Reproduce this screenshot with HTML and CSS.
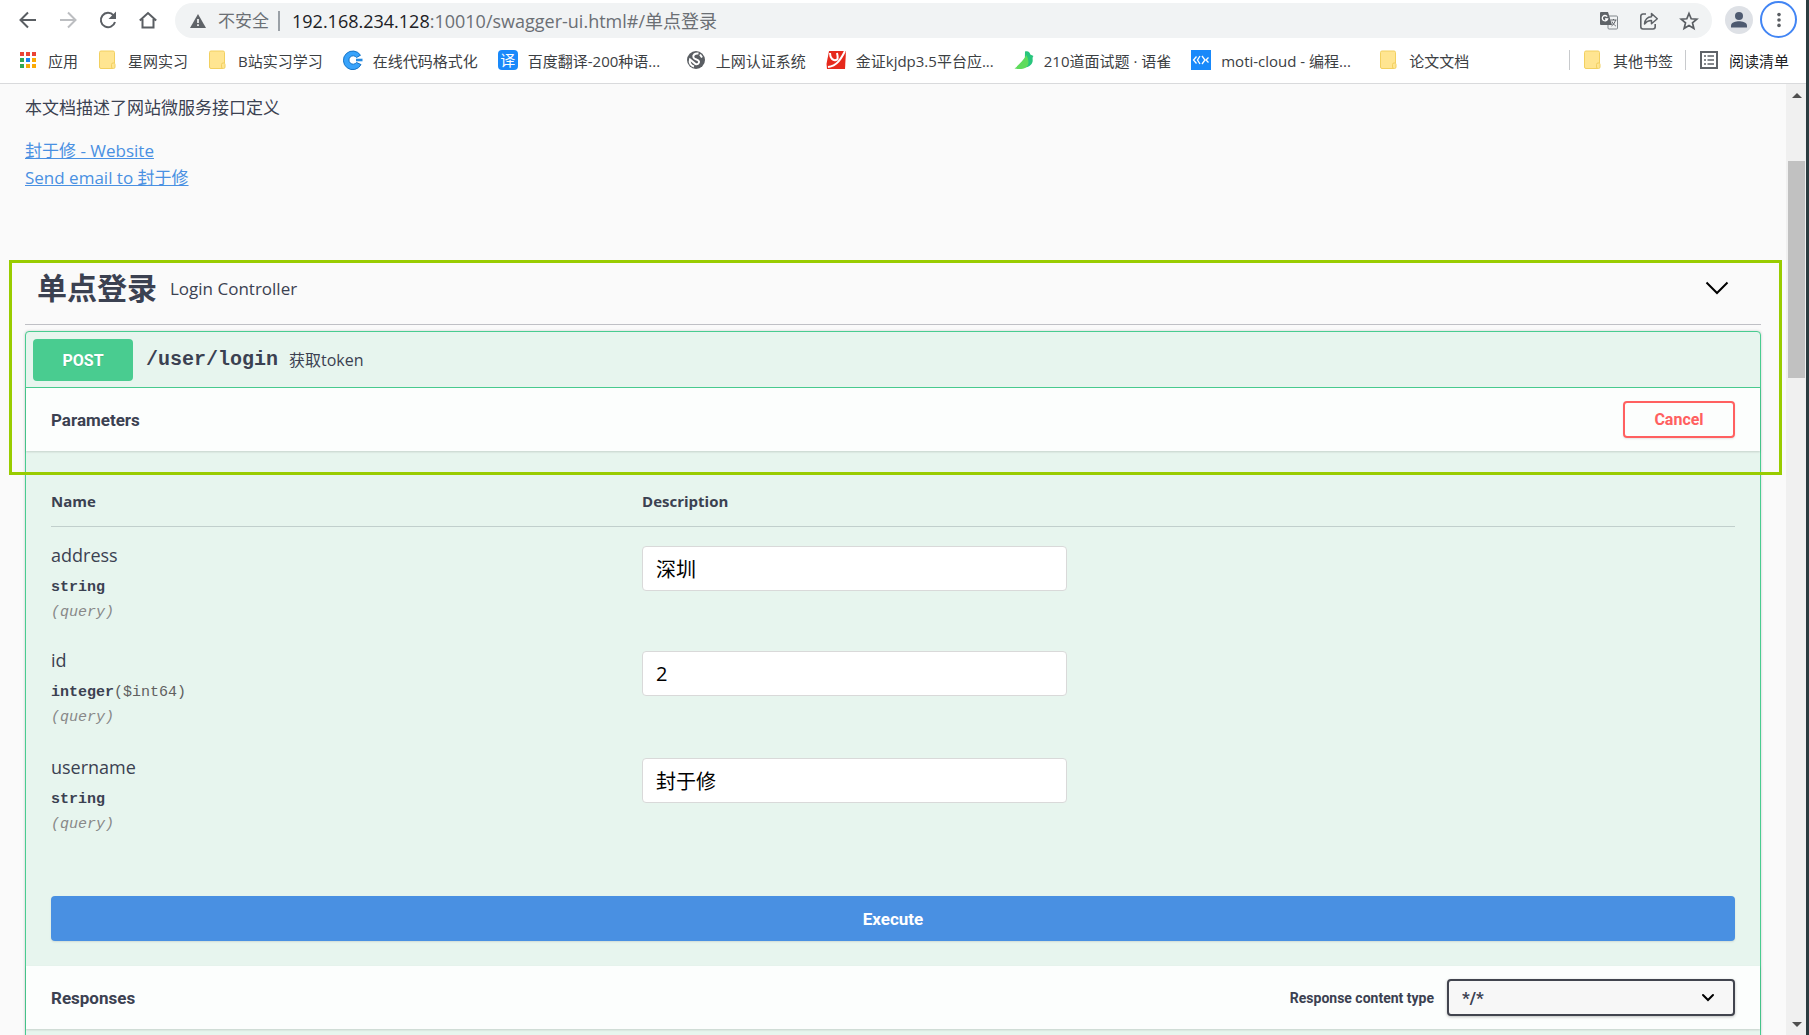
FILE: index.html
```html
<!DOCTYPE html>
<html lang="zh-CN">
<head>
<meta charset="utf-8">
<title>Swagger UI</title>
<link rel="stylesheet" href="styles.css">
</head>
<body>
<svg class="sprite" aria-hidden="true">
  <symbol id="folder" viewBox="0 0 20 20"><path d="M3 1h12a1.500 1.500 0 0 1 1.500 1.500V13a2 2 0 0 0-2 2v3.500H3A1.500 1.500 0 0 1 1.500 17V2.500A1.500 1.500 0 0 1 3 1z" fill="#ffe591" stroke="#f2d060"/><rect x="13.500" y="13" width="3.500" height="5.500" rx="1.500" fill="#ffe591" stroke="#f2d060"/></symbol>
</svg>
<div class="screen">
  <div class="browser">
    <header class="chrome">
      <div class="toolbar">
        <button class="nav-btn" aria-label="后退"><svg viewBox="0 0 20 20"><path d="M18 10H3M10 2.500L2.500 10l7.500 7.500" fill="none" stroke="#5a5e63" stroke-width="2"/></svg></button>
        <button class="nav-btn" aria-label="前进"><svg viewBox="0 0 20 20"><path d="M2 10h15M10 2.500l7.500 7.500-7.500 7.500" fill="none" stroke="#bcbec1" stroke-width="2"/></svg></button>
        <button class="nav-btn" aria-label="刷新"><svg viewBox="0 0 20 20"><path d="M15.500 5.300A7.200 7.200 0 1 0 17 12" fill="none" stroke="#5a5e63" stroke-width="2"/><path d="M18 1.500V9h-7.500z" fill="#5a5e63"/></svg></button>
        <button class="nav-btn" aria-label="主页"><svg viewBox="0 0 20 20"><path d="M1.800 10.500L10 3l8.200 7.500M4.500 9v8.500h11V9" fill="none" stroke="#5a5e63" stroke-width="2"/></svg></button>
        <div class="omnibox">
          <svg class="warn" viewBox="0 0 16 14"><path d="M8 0l8 14H0z" fill="#5f6368"/><path d="M7.200 5h1.600v4H7.200zM7.200 10.300h1.600v1.700H7.200z" fill="#fff"/></svg>
          <span class="insecure">不安全</span>
          <span class="divider"></span>
          <span class="url"><b>192.168.234.128</b>:10010/swagger-ui.html#/单点登录</span>
          <button class="omni-btn" aria-label="翻译"><svg viewBox="0 0 20 20"><rect x="9" y="5" width="9.500" height="13" rx="1" fill="#f1f3f4" stroke="#80868b"/><path d="M2 1h7l4 13H2a1 1 0 0 1-1-1V2a1 1 0 0 1 1-1z" fill="#5f6368"/><path d="M8.200 5.600A2.700 2.700 0 1 0 8.600 8H6" fill="none" stroke="#fff" stroke-width="1.300"/><path d="M11.500 9h6M14.500 8v1M16.500 9c-.5 2.500-2 4.500-4 6M13 10.500c.8 2 2 3.500 3.800 4.500" fill="none" stroke="#5f6368"/></svg></button>
          <button class="omni-btn" aria-label="分享"><svg viewBox="0 0 20 20"><path d="M7 3H4a2.200 2.200 0 0 0-2.200 2.200v10.600A2.200 2.200 0 0 0 4 18h10a2.200 2.200 0 0 0 2.200-2.200V13" fill="none" stroke="#5f6368" stroke-width="1.600"/><path d="M5.500 13C6 8.500 8.500 6 12.500 5.800V2.500L18.300 7.700l-5.800 5V9.600C9.500 9.500 7.500 10.500 5.500 13z" fill="none" stroke="#5f6368" stroke-width="1.500" stroke-linejoin="round"/></svg></button>
          <button class="omni-btn" aria-label="收藏"><svg viewBox="0 0 20 20"><path d="M10 2.500l2.200 5.300 5.600.4-4.300 3.700 1.400 5.600L10 14.500l-4.900 3 1.400-5.600-4.300-3.700 5.600-.4z" fill="none" stroke="#5a5e63" stroke-width="1.700"/></svg></button>
        </div>
        <button class="avatar" aria-label="用户"><svg viewBox="0 0 28 28"><circle cx="14" cy="10" r="4" fill="#4e5a70"/><path d="M6 21.500v-2c0-3 5-4.200 8-4.200s8 1.200 8 4.200v2z" fill="#4e5a70"/></svg></button>
        <button class="menu" aria-label="菜单"><svg viewBox="0 0 20 20"><circle cx="10" cy="4" r="2" fill="#5a5e63"/><circle cx="10" cy="10" r="2" fill="#5a5e63"/><circle cx="10" cy="16" r="2" fill="#5a5e63"/></svg></button>
      </div>
      <nav class="bookmarks">
        <a href="#"><svg viewBox="0 0 20 20"><path d="M2 2h4v4H2zM8 2h4v4H8zM14 2h4v4h-4z" fill="#ea4335"/><path d="M2 8h4v4H2zM2 14h4v4H2z" fill="#34a853"/><path d="M8 8h4v4H8z" fill="#1a82f0"/><path d="M14 8h4v4h-4zM8 14h4v4H8zM14 14h4v4h-4z" fill="#fbaa05"/></svg><span>应用</span></a>
        <a href="#"><svg><use href="#folder"/></svg><span>星网实习</span></a>
        <a href="#"><svg><use href="#folder"/></svg><span>B站实习学习</span></a>
        <a href="#"><svg viewBox="0 0 20 20"><path d="M17.500 5.200L13.500 7.500A4.200 4.200 0 1 0 13.500 12.500L18 14.600A9.300 9.300 0 1 1 17.500 5.200z" fill="#38a3fb" stroke="#1573c6"/><path d="M13 8.700h6.500v2.600H13z" fill="#2389e0"/></svg><span>在线代码格式化</span></a>
        <a href="#"><span class="fanyi">译</span><span class="clipped">百度翻译-200种语...</span></a>
        <a href="#"><svg viewBox="0 0 20 20"><circle cx="10" cy="10" r="9" fill="#5a5e63"/><path d="M12.500 3.500C9 3 6.500 5 7.500 7.500s5 1.500 5.500 4-2 3-3.500 2.500L4 9.500c-1 3 .5 6 4 7M14 4.500l2 3" fill="none" stroke="#fff" stroke-width="2"/></svg><span>上网认证系统</span></a>
        <a href="#"><svg viewBox="0 0 20 20"><path d="M3 1h17l-1 18H1L.5 14z" fill="#e6291c"/><path d="M4 3c0 5 3 8 6 7 2 0 2-3 1-7M19 1c-4 8-8 15-17 16" fill="none" stroke="#fff" stroke-width="2"/></svg><span class="clipped">金证kjdp3.5平台应...</span></a>
        <a href="#"><svg viewBox="0 0 20 20"><path d="M11 1.500c3-1 5 .5 5.300 3L19.500 6c-1 1-1 2-.8 4 .2 4-3 7-8 7.500z" fill="#28c57d"/><path d="M12.500 5C10 9 5 15 .5 18.500c7 1.500 14 0 14-6 0-3-1-5-2-7.500z" fill="#5fdb5c"/></svg><span>210道面试题 · 语雀</span></a>
        <a href="#"><svg viewBox="0 0 20 20"><path d="M0 0h20v20H0z" fill="#1989fa"/><path d="M5.500 6.500L2.500 10l3 3.500M9 6l-2.500 4L9 14M11 6l3 4-3 4M17.500 7.500L15 10l2.500 2.500" fill="none" stroke="#fff" stroke-width="1.300"/></svg><span class="clipped">moti-cloud - 编程...</span></a>
        <a href="#"><svg><use href="#folder"/></svg><span>论文文档</span></a>
        <div class="bookmarks-end">
          <a href="#"><svg><use href="#folder"/></svg><span>其他书签</span></a>
          <a href="#"><svg viewBox="0 0 20 20"><rect x="2" y="2" width="16" height="16" fill="none" stroke="#5f6368" stroke-width="2"/><path d="M5 6h2M8.500 6H15M5 10h2M8.500 10H15M5 14h2M8.500 14H15" stroke="#5f6368" stroke-width="1.700"/></svg><span class="reading">阅读清单</span></a>
        </div>
      </nav>
    </header>
    <div class="viewport">
      <main class="page">
        <section class="info">
          <p>本文档描述了网站微服务接口定义</p>
          <div><a href="#">封于修 - Website</a></div>
          <div><a href="#">Send email to 封于修</a></div>
        </section>
        <section class="tag">
          <div class="highlight"></div>
          <div class="tag-head">
            <h1>单点登录</h1>
            <small>Login Controller</small>
            <button class="collapse" aria-label="收起"><svg viewBox="0 0 24 14"><path d="M1.500 1.500L12 12 22.500 1.500" fill="none" stroke="#000" stroke-width="2"/></svg></button>
          </div>
          <div class="opblock">
            <div class="summary">
              <span class="method">POST</span>
              <span class="path">/user/login</span>
              <span class="summary-text">获取token</span>
            </div>
            <div class="section-head">
              <h2>Parameters</h2>
              <button class="btn cancel">Cancel</button>
            </div>
            <div class="params">
              <table>
                <thead><tr><th class="col-name">Name</th><th>Description</th></tr></thead>
                <tbody>
                  <tr>
                    <td><label class="p-name" for="address">address</label><div class="p-type">string</div><div class="p-in">(query)</div></td>
                    <td><input id="address" type="text" value="深圳"></td>
                  </tr>
                  <tr>
                    <td><label class="p-name" for="id">id</label><div class="p-type">integer<span>($int64)</span></div><div class="p-in">(query)</div></td>
                    <td><input id="id" type="text" value="2"></td>
                  </tr>
                  <tr>
                    <td><label class="p-name" for="username">username</label><div class="p-type">string</div><div class="p-in">(query)</div></td>
                    <td><input id="username" type="text" value="封于修"></td>
                  </tr>
                </tbody>
              </table>
              <button class="btn execute">Execute</button>
            </div>
            <div class="section-head">
              <h2>Responses</h2>
              <label class="ctype-label" for="ctype">Response content type</label>
              <div class="select">
                <select id="ctype"><option>*/*</option></select>
                <svg viewBox="0 0 14 10"><path d="M2 2l5 5 5-5" fill="none" stroke="#000" stroke-width="2" stroke-linecap="round"/></svg>
              </div>
            </div>
            <div class="responses"></div>
          </div>
        </section>
      </main>
      <div class="scrollbar">
        <svg viewBox="0 0 10 5"><path d="M0 5l5-5 5 5z" fill="#505050"/></svg>
        <div class="track"><div class="thumb"></div></div>
        <svg viewBox="0 0 10 5"><path d="M0 0h10L5 5z" fill="#505050"/></svg>
      </div>
    </div>
  </div>
  <div class="desktop-edge"></div>
</div>
</body>
</html>
```
FILE: styles.css
```css
* { box-sizing: border-box; }

body {
  margin: 0;
  color: #3b4151;
  background: #fafafa;
  font-family: "Open Sans", "Noto Sans CJK SC", sans-serif;
  font-size: 17px;
}

h1, h2, p { margin: 0; }
button { padding: 0; border: 0; background: none; font: inherit; color: inherit; }
svg { display: block; flex: none; }
.sprite { position: absolute; width: 0; height: 0; }

.screen { display: flex; height: 100vh; overflow: hidden; }
.browser { flex: 1; min-width: 0; display: flex; flex-direction: column; }
.desktop-edge { width: 3px; background: #2b3c40; }

/* Browser toolbar */
.chrome { background: #fff; border-bottom: 1px solid #d9dadc; }
.toolbar { display: flex; align-items: center; padding: 1px 9px 1px 18px; }
.nav-btn { width: 20px; margin-right: 20px; }
.nav-btn svg, .omni-btn svg, .menu svg, .bookmarks svg { width: 20px; height: 20px; }
.omnibox {
  flex: 1;
  display: flex;
  align-items: center;
  height: 35px;
  margin: 2px 13px 0 0;
  padding: 0 13px 0 15px;
  border-radius: 18px;
  background: #f1f3f4;
  color: #6b6f74;
  white-space: nowrap;
}
.nav-btn:nth-child(4) { margin-right: 17px; }
.warn { width: 16px; height: 14px; }
.insecure { margin-left: 12px; padding-bottom: 2px; }
.divider { width: 2px; height: 20px; margin: 0 12px 0 9px; background: #9aa0a6; }
.url { flex: 1; padding-bottom: 2px; font-size: 18px; }
.url b { font-weight: 400; color: #202124; }
.omni-btn { margin-left: 20px; }
.avatar { width: 28px; height: 28px; border-radius: 50%; background: #dee1e6; }
.menu {
  display: grid;
  place-items: center;
  width: 37px;
  height: 37px;
  margin-left: 7px;
  border: 2px solid #4285f4;
  border-radius: 50%;
}
.menu svg { width: 18px; height: 18px; }

.bookmarks {
  display: flex;
  align-items: center;
  gap: 20px;
  height: 44px;
  padding: 0 17px 2px 18px;
  font-size: 15px;
  white-space: nowrap;
}
.bookmarks a { display: flex; align-items: center; gap: 10px; color: #3c4043; text-decoration: none; }
.bookmarks .clipped { width: 138px; }
.bookmarks .reading { color: #202124; }
.fanyi {
  width: 20px;
  border-radius: 4px;
  background: #1989fa;
  color: #fff;
  line-height: 20px;
  text-align: center;
}
.bookmarks-end { display: flex; margin-left: auto; }
.bookmarks-end a { height: 20px; padding-left: 13px; border-left: 1px solid #c8cacd; }
.bookmarks-end a + a { margin-left: 12px; }

/* Scrolled page */
.viewport { flex: 1; min-height: 0; display: flex; }
.page { flex: 1; min-width: 0; overflow: hidden; padding: 10px 25px 0; background: #fafafa; }

.scrollbar {
  width: 20px;
  display: flex;
  flex-direction: column;
  align-items: center;
  gap: 10px;
  padding: 9px 1px 8px 2px;
  background: #f0f0f0;
}
.scrollbar svg { width: 10px; height: 5px; }
.track { flex: 1; align-self: stretch; padding-top: 53px; }
.thumb { height: 25.5%; background: #c1c1c1; }

.info { line-height: 27px; }
.info p { margin-bottom: 16px; }
.info a { color: #4990e2; }

.tag { position: relative; margin-top: 69px; }
.highlight {
  position: absolute;
  inset: 0 -21px auto -16px;
  height: 215px;
  border: 3px solid #9c0;
  z-index: 1;
  pointer-events: none;
}
.tag-head {
  display: flex;
  align-items: center;
  height: 65px;
  padding: 0 32px 8px 12px;
  border-bottom: 1px solid #bfc0c5;
}
.tag-head h1 { font-size: 30px; line-height: 40px; }
.tag-head small { flex: 1; margin-left: 13px; font-size: 17px; }
.collapse svg { width: 24px; height: 14px; }

.opblock {
  margin-top: 6px;
  border: 1px solid #49cc90;
  border-radius: 4px;
  background: #e7f5ee;
  box-shadow: 0 0 3px rgba(0, 0, 0, .19);
}
.summary { display: flex; align-items: center; padding: 7px; height: 56px; border-bottom: 1px solid #49cc90; }
.method {
  width: 100px;
  padding-top: 1px;
  border-radius: 4px;
  background: #49cc90;
  color: #fff;
  font: 700 16px/41px Roboto, sans-serif;
  text-align: center;
  text-shadow: 0 1px 0 rgba(0, 0, 0, .1);
}
.path { margin-left: 13px; font: 700 20px "Liberation Mono", monospace; }
.summary-text { margin-left: 11px; padding-bottom: 2px; font-size: 16px; }

.section-head {
  display: flex;
  align-items: center;
  height: 63px;
  padding: 0 25px;
  background: #fcfefd;
  box-shadow: 0 1px 2px rgba(0, 0, 0, .15);
}
.section-head h2 { flex: 1; font: 700 17px Roboto, sans-serif; }
.btn {
  border-radius: 4px;
  font: 700 17px Roboto, sans-serif;
  box-shadow: 0 1px 2px rgba(0, 0, 0, .1);
}
.cancel { width: 112px; height: 37px; border: 2px solid #ff6060; color: #ff6060; font-size: 16px; }

.params { padding: 25px; }
table { width: 100%; border-collapse: collapse; }
th { height: 50px; border-bottom: 1px solid #c1cfcc; font-size: 15px; text-align: left; padding: 0; }
.col-name { width: 35.1%; }
td { height: 107px; padding: 13px 0 0; vertical-align: top; }
tbody tr:first-child td { height: 112px; padding-top: 19px; }
.p-name { display: block; font-size: 18px; line-height: 18px; }
.p-type { margin-top: 12px; font: 700 15px/24px "Liberation Mono", monospace; }
.p-type span { font-weight: 400; color: #606060; }
.p-in { font: italic 15px/26px "Liberation Mono", monospace; color: #888; }
td input {
  display: block;
  width: 425px;
  height: 45px;
  padding: 0 13px;
  border: 1px solid #d9d9d9;
  border-radius: 4px;
  background: #fff;
  color: #000;
  font: 20px "Open Sans", "Noto Sans CJK SC", sans-serif;
}
.execute { display: block; width: 100%; height: 45px; margin-top: 44px; background: #4990e2; color: #fff; }

.ctype-label { margin-right: 13px; font: 700 14px Roboto, sans-serif; }
.select { position: relative; width: 288px; }
.select select {
  appearance: none;
  display: block;
  width: 100%;
  height: 37px;
  padding: 0 13px;
  border: 2px solid #41444e;
  border-radius: 4px;
  background: #f7f7f7;
  box-shadow: 0 1px 3px rgba(0, 0, 0, .25);
  color: #3b4151;
  font: 700 17px Roboto, sans-serif;
}
.select svg { position: absolute; top: 14px; right: 20px; width: 14px; height: 10px; pointer-events: none; }
.responses { height: 200px; }
```
